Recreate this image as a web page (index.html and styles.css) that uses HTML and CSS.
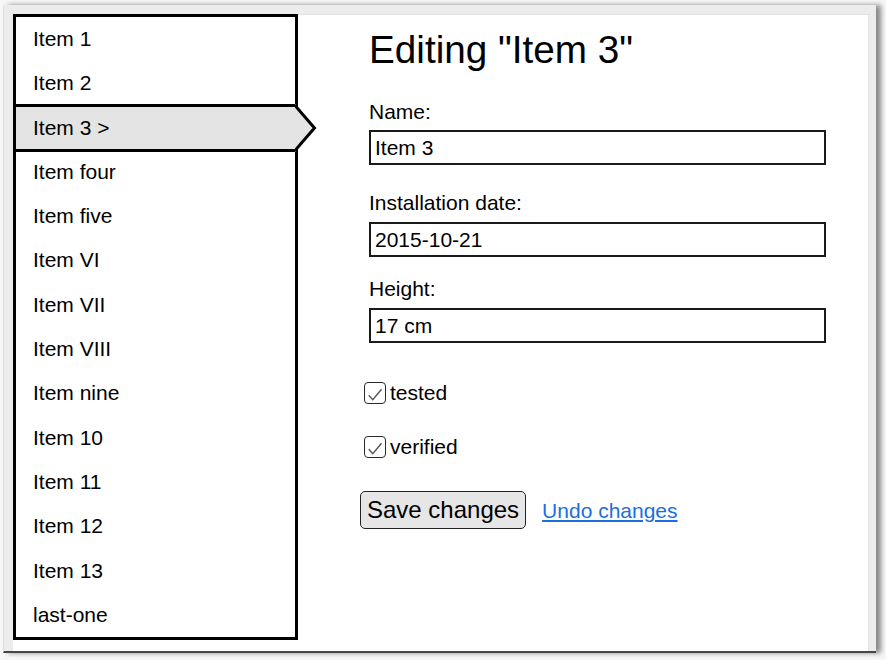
FILE: index.html
```html
<!DOCTYPE html>
<html lang="en">
<head>
<meta charset="utf-8">
<title>Editor</title>
<link rel="stylesheet" href="styles.css">
</head>
<body>
<div class="window">
  <div class="panel">
    <ul class="list">
      <li class="item">Item 1</li>
      <li class="item">Item 2</li>
      <li class="item selected">Item 3 &gt;<svg class="pointer" width="22" height="48" viewBox="0 0 22 48"><polygon points="0,0 19.5,24 0,48" fill="#e4e4e4"/><polyline points="0,1.5 19.5,24 0,46.5" fill="none" stroke="#000" stroke-width="3" stroke-linejoin="miter"/></svg></li>
      <li class="item">Item four</li>
      <li class="item">Item five</li>
      <li class="item">Item VI</li>
      <li class="item">Item VII</li>
      <li class="item">Item VIII</li>
      <li class="item">Item nine</li>
      <li class="item">Item 10</li>
      <li class="item">Item 11</li>
      <li class="item">Item 12</li>
      <li class="item">Item 13</li>
      <li class="item">last-one</li>
    </ul>
    <form class="editor">
      <h1 class="title">Editing "Item 3"</h1>
      <div class="field f1">
        <label class="label">Name:</label>
        <input class="input" type="text" value="Item 3">
      </div>
      <div class="field f2">
        <label class="label">Installation date:</label>
        <input class="input" type="text" value="2015-10-21">
      </div>
      <div class="field f3">
        <label class="label">Height:</label>
        <input class="input" type="text" value="17 cm">
      </div>
      <label class="check first"><span class="box"><svg width="19" height="19" viewBox="0 0 19 19"><polyline points="2.8,11.3 6.8,15.8 15.5,5.3" fill="none" stroke="#555" stroke-width="1.4"/></svg></span>tested</label>
      <label class="check"><span class="box"><svg width="19" height="19" viewBox="0 0 19 19"><polyline points="2.8,11.3 6.8,15.8 15.5,5.3" fill="none" stroke="#555" stroke-width="1.4"/></svg></span>verified</label>
      <div class="actions">
        <button class="btn" type="button">Save changes</button>
        <a class="link" href="#">Undo changes</a>
      </div>
    </form>
  </div>
</div>
</body>
</html>
```
FILE: styles.css
```css
html, body {
  margin: 0;
  padding: 0;
}
body {
  width: 886px;
  height: 660px;
  overflow: hidden;
  background: #f7f7f7;
  font-family: "Liberation Sans", Arial, sans-serif;
  color: #000;
}
.window {
  margin: 5px 0 0 3px;
  width: 873px;
  height: 648px;
  box-sizing: border-box;
  background: #ececec;
  border-left: 1px solid #e0e0e0;
  border-bottom: 2px solid #464646;
  padding: 9px 7px 0 9px;
  box-shadow: 5px 0 5px rgba(0, 0, 0, 0.45);
}
.panel {
  display: flex;
  height: 100%;
  box-sizing: border-box;
  background: #fff;
  border-top: 1px solid #e2e2e2;
  border-right: 1px solid #e2e2e2;
}
.list {
  margin: -1px 0 0;
  padding: 0;
  list-style: none;
  width: 285px;
  height: 626px;
  box-sizing: border-box;
  border: 3px solid #000;
  display: flex;
  flex-direction: column;
  flex: none;
}
.item {
  flex: 1 1 0;
  display: flex;
  align-items: center;
  padding-left: 17px;
  font-size: 21px;
}
.selected {
  flex: 0 0 48px;
  margin: -2px 0;
  position: relative;
  box-sizing: border-box;
  background: #e4e4e4;
  border-top: 3px solid #000;
  border-bottom: 3px solid #000;
}
.pointer {
  position: absolute;
  left: 100%;
  top: -3px;
  display: block;
}
.editor {
  display: flex;
  flex-direction: column;
  align-items: flex-start;
  margin: 0 0 0 62px;
  padding-top: 13px;
}
.title {
  margin: 0 0 0 9px;
  font-size: 38.7px;
  font-weight: normal;
  line-height: 44px;
}
.field {
  display: flex;
  flex-direction: column;
  align-items: flex-start;
  margin: 22px 0 0 9px;
}
.field.f1 {
  margin-top: 28px;
}
.field.f2 {
  margin-top: 26px;
}
.field.f3 {
  margin-top: 20px;
}
.label {
  font-size: 21px;
  line-height: 24px;
}
.field.f1 .input {
  margin-top: 6px;
}
.input {
  margin: 7px 0 0;
  width: 457px;
  height: 35px;
  box-sizing: border-box;
  border: 2px solid #1a1a1a;
  border-radius: 0;
  padding: 0 4px;
  font-family: "Liberation Sans", Arial, sans-serif;
  font-size: 21px;
  color: #000;
  background: #fff;
  outline: none;
}
.check {
  display: flex;
  align-items: center;
  height: 28px;
  margin: 26px 0 0 4px;
  font-size: 21px;
  gap: 4px;
}
.check.first {
  margin-top: 36px;
}
.box {
  width: 22px;
  height: 22px;
  box-sizing: border-box;
  border: 1.5px solid #2a2a2a;
  border-radius: 4px;
  display: flex;
  align-items: center;
  justify-content: center;
  background: #fff;
}
.box svg {
  display: block;
}
.actions {
  display: flex;
  align-items: baseline;
  gap: 16px;
  margin-top: 30px;
}
.btn {
  height: 38px;
  box-sizing: border-box;
  padding: 0 6px;
  border: 1.5px solid #222;
  border-radius: 5px;
  background: #e6e6e6;
  font-family: "Liberation Sans", Arial, sans-serif;
  font-size: 24px;
  color: #000;
}
.link {
  font-size: 21px;
  color: #1a6fe0;
  text-decoration: underline;
}
```
